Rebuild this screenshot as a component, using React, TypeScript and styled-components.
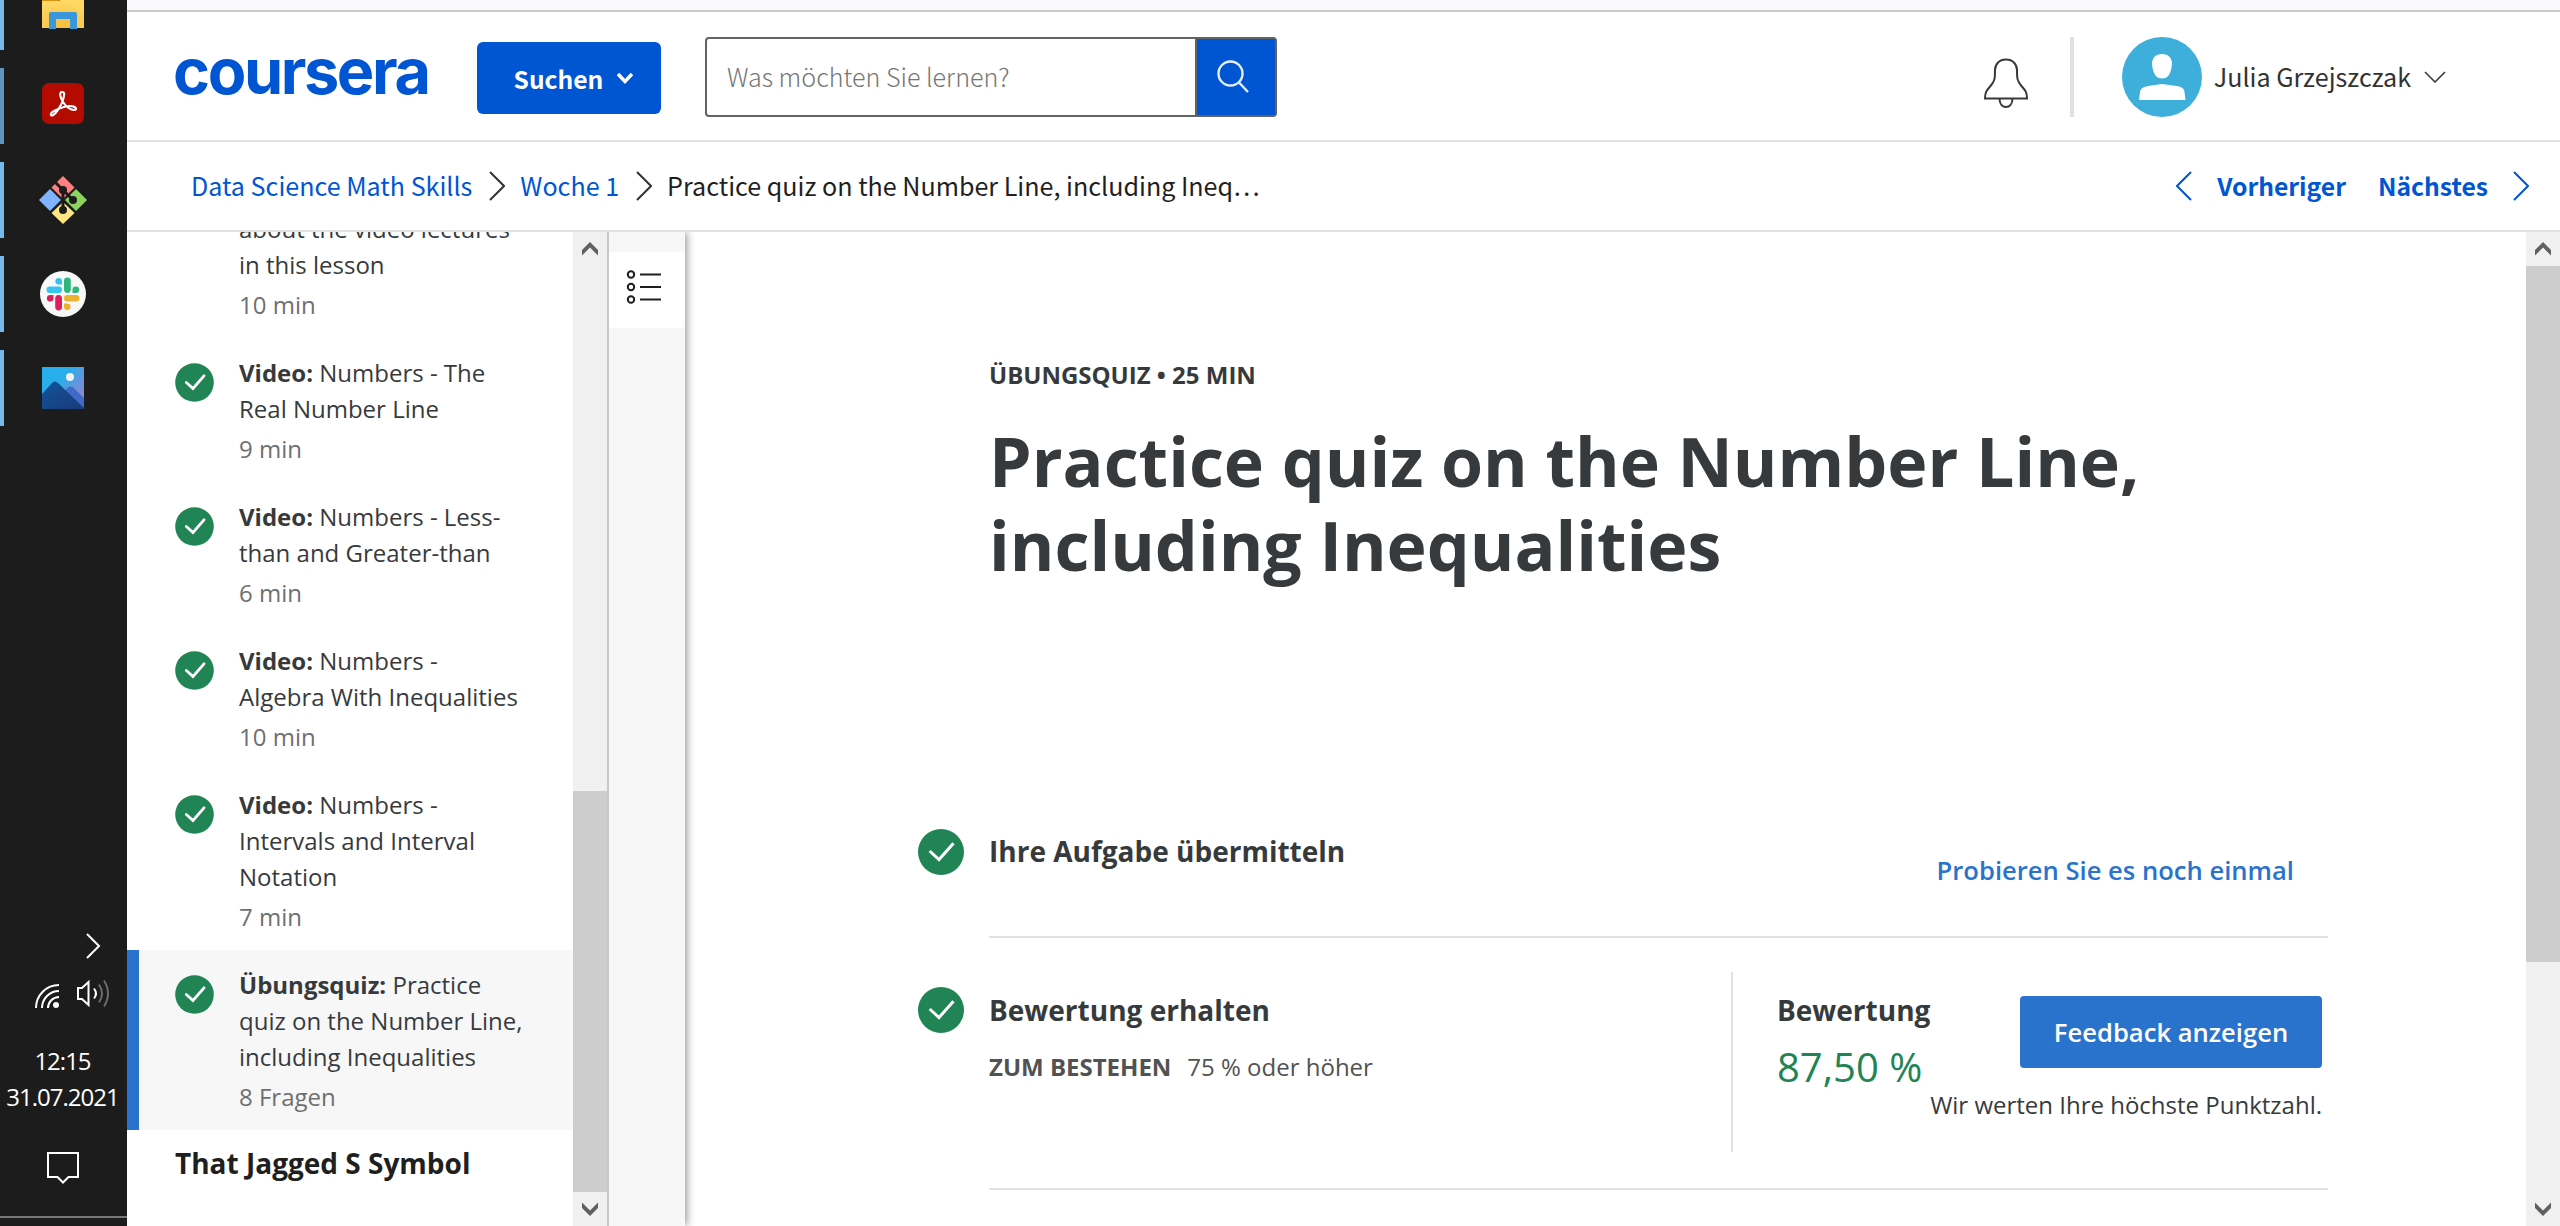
import React from "react";
import styled, { createGlobalStyle } from "styled-components";

const sans = `"Open Sans", "Noto Sans", sans-serif`;
const source = `"Noto Sans CJK SC", "Noto Sans", sans-serif`;

const Global = createGlobalStyle`
  * { box-sizing: border-box; }
  body { margin: 0; background: #fff; font-family: ${sans}; color: #373a3c; overflow: hidden; }
  svg { display: block; flex: none; }
`;

const Screen = styled.div`
  display: grid;
  grid-template-columns: 127px minmax(0, 1fr);
  width: 2560px;
  height: 1226px;
  overflow: hidden;
`;

/* Taskbar */
const Taskbar = styled.aside`
  display: flex;
  flex-direction: column;
  background: #1c1c1c;
  height: 1226px;
  overflow: hidden;
`;
const Apps = styled.div`
  display: flex;
  flex-direction: column;
  gap: 18px;
  margin-top: -26px;
`;
const AppTile = styled.div<{ $dim?: boolean }>`
  height: 76px;
  border-left: 4px solid ${(p) => (p.$dim ? "#5f94c0" : "#76b9ed")};
  padding-right: 5px;
  display: flex;
  align-items: center;
  justify-content: center;
`;
const Tray = styled.div`
  display: flex;
  flex-direction: column;
  margin-top: auto;
  height: 294px;
`;
const TrayRow = styled.div<{ $left: number; $top: number; $gap?: number }>`
  display: flex;
  align-items: flex-end;
  gap: ${(p) => p.$gap ?? 0}px;
  padding-left: ${(p) => p.$left}px;
  margin-top: ${(p) => p.$top}px;
`;
const Clock = styled.div`
  margin-top: 35px;
  color: #fff;
  font-size: 24px;
  line-height: 36px;
  letter-spacing: -1px;
  text-align: center;
  white-space: nowrap;
  padding-right: 2px;
`;
const TrayEdge = styled.div`
  margin-top: auto;
  margin-bottom: 8px;
  height: 2px;
  background: #777;
`;

/* Page frame */
const Page = styled.div`
  display: flex;
  flex-direction: column;
  background: #fff;
  min-width: 0;
  height: 1226px;
`;
const BrowserEdge = styled.div`
  height: 12px;
  background: #f9f9fc;
  border-bottom: 2px solid #ccc;
  flex: none;
`;
const Header = styled.header`
  height: 130px;
  flex: none;
  display: flex;
  align-items: flex-start;
  padding: 25px 114px 0 46px;
  border-bottom: 2px solid #e1e1e1;
  font-family: ${source};
  font-size: 25.1px;
`;
const Logo = styled.div`
  width: 304px;
  font-family: Inter, sans-serif;
  font-weight: 700;
  font-size: 63px;
  line-height: 69px;
  letter-spacing: -2.4px;
  color: #0056d2;
`;
const Explore = styled.button`
  width: 184px;
  height: 72px;
  margin-top: 5px;
  border: 0;
  border-radius: 6px;
  padding: 0 0 0 10px;
  background: #0056d2;
  color: #fff;
  font: 700 24.6px/36px ${source};
  display: flex;
  align-items: center;
  justify-content: center;
  gap: 13px;
`;
const Search = styled.div`
  margin-left: 44px;
  width: 572px;
  height: 80px;
  border: 2px solid #636363;
  border-radius: 4px;
  display: flex;
`;
const SearchField = styled.div`
  flex: 1;
  padding-left: 20px;
  line-height: 74px;
  font-weight: 300;
  color: #757575;
  border-right: 2px solid #636363;
`;
const SearchButton = styled.div`
  width: 78px;
  background: #0056d2;
  display: flex;
  align-items: center;
  justify-content: center;
`;
const Account = styled.div`
  margin-left: auto;
  display: flex;
  align-items: center;
  height: 80px;
`;
const Separator = styled.div`
  width: 4px;
  height: 80px;
  margin: 0 48px 0 42px;
  background: #e1e1e1;
`;
const UserName = styled.span`
  margin: 0 13px 2px 12px;
  color: #333;
`;

const Crumbs = styled.nav`
  height: 90px;
  flex: none;
  display: flex;
  align-items: center;
  border-bottom: 2px solid #e1e1e1;
  padding: 0 31px 0 64px;
  font-family: ${source};
  font-size: 25.1px;
  line-height: 36px;
  white-space: nowrap;
`;
const Crumb = styled.a<{ $current?: boolean }>`
  margin-bottom: 2px;
  color: ${(p) => (p.$current ? "#1f1f1f" : "#0056d2")};
`;
const CrumbArrow = styled.span`
  margin: 0 15px 0 17px;
`;
const Pager = styled.div`
  margin-left: auto;
  display: flex;
  align-items: center;
  font-size: 24.7px;
  font-weight: 700;
  color: #0056d2;
`;
const PagerLabel = styled.span<{ $before: number; $after: number }>`
  margin: 0 ${(p) => p.$after}px 2px ${(p) => p.$before}px;
`;

/* Body */
const Body = styled.div`
  height: 994px;
  display: grid;
  grid-template-columns: 446px 34px 78px minmax(0, 1fr) 34px;
  overflow: hidden;
`;
const Lessons = styled.div`
  height: 994px;
  display: flex;
  flex-direction: column;
  justify-content: flex-end;
  overflow: hidden;
`;
const Lesson = styled.div<{ $active?: boolean }>`
  flex: none;
  display: flex;
  padding: 17px 40px 15px 36px;
  border-left: 12px solid ${(p) => (p.$active ? "#2a73cc" : "transparent")};
  background: ${(p) => (p.$active ? "#f7f7f7" : "#fff")};
  font-size: 24px;
  line-height: 36px;
`;
const LessonMark = styled.div`
  width: 64px;
  padding: 7.5px 0 0 0.3px;
  flex: none;
`;
const LessonText = styled.div`
  color: #373a3c;
  white-space: nowrap;
`;
const LessonMeta = styled.div`
  margin-top: 4px;
  color: #6f6f6f;
`;
const LessonHeading = styled.div`
  flex: none;
  height: 96px;
  padding: 14px 0 0 48px;
  font-size: 28px;
  font-weight: 700;
  line-height: 38px;
  color: #1f1f1f;
`;
const ScrollTrack = styled.div`
  display: flex;
  flex-direction: column;
  background: #f0f0f0;
  height: 994px;
`;
const ScrollArrow = styled.div`
  height: 34px;
  flex: none;
  display: flex;
  align-items: center;
  justify-content: center;
`;
const ScrollThumb = styled.div<{ $offset: number; $length: number }>`
  margin-top: ${(p) => p.$offset}px;
  margin-bottom: auto;
  height: ${(p) => p.$length}px;
  background: #cdcdcd;
`;
const Rail = styled.div`
  border-left: 2px solid #c8c8c8;
  background: #f7f7f7;
  box-shadow: 2px 0 8px rgba(0, 0, 0, 0.4);
  clip-path: inset(0 -14px 0 0);
  padding-top: 20px;
  position: relative;
`;
const RailButton = styled.div`
  height: 76px;
  border-radius: 4px;
  background: #fff;
  display: flex;
  align-items: center;
  justify-content: center;
  padding: 0 6px 7px 0;
`;
const Main = styled.main`
  padding: 125px 198px 0 233px;
`;
const Eyebrow = styled.div`
  margin-left: 71px;
  font-size: 24px;
  line-height: 36px;
  font-weight: 700;
  white-space: nowrap;
`;
const Title = styled.h1`
  margin: 26px 0 0 71px;
  font-size: 68px;
  line-height: 84px;
  font-weight: 700;
  white-space: nowrap;
  height: 378px;
`;
const Step = styled.section`
  display: flex;
  align-items: flex-start;
`;
const StepBody = styled.div<{ $height: number }>`
  margin-left: 25px;
  flex: 1;
  height: ${(p) => p.$height}px;
  border-bottom: 2px solid #e1e1e1;
  display: flex;
`;
const StepMark = styled.div<{ $top: number }>`
  padding-top: ${(p) => p.$top}px;
`;
const StepInfo = styled.div<{ $top: number }>`
  padding-top: ${(p) => p.$top}px;
  white-space: nowrap;
`;
const StepTitle = styled.div`
  font-size: 28px;
  line-height: 38px;
  font-weight: 700;
`;
const Requirement = styled.div`
  margin-top: 20px;
  display: flex;
  gap: 16px;
  font-size: 24px;
  line-height: 36px;
  color: #525252;
`;
const Strong = styled.span`
  font-weight: 700;
`;
const Retry = styled.a`
  margin: 56px 34px 0 auto;
  font-size: 25.6px;
  line-height: 36px;
  font-weight: 600;
  color: #2a73cc;
  white-space: nowrap;
`;
const GradePane = styled.div`
  margin: 34px 6px 0 auto;
  height: 180px;
  width: 591px;
  border-left: 2px solid #e1e1e1;
  padding-left: 44px;
  display: flex;
  justify-content: space-between;
  white-space: nowrap;
`;
const Grade = styled.div`
  padding-top: 19px;
  width: 153px;
`;
const GradeValue = styled.div`
  margin-top: 11px;
  font-size: 40px;
  line-height: 54px;
  color: #208455;
`;
const GradeAction = styled.div`
  padding-top: 24px;
  display: flex;
  flex-direction: column;
  align-items: flex-end;
  font-size: 24px;
  line-height: 36px;
`;
const Feedback = styled.button`
  width: 302px;
  height: 72px;
  border: 0;
  border-radius: 4px;
  padding: 2px 0 0;
  margin-bottom: 19px;
  background: #2a73cc;
  color: #fff;
  font: 600 25.6px/36px ${sans};
`;

const Chevron = ({ w, h, d, color, sw = 2 }: { w: number; h: number; d: string; color: string; sw?: number }) => (
  <svg width={w} height={h} viewBox={`0 0 ${w} ${h}`} fill="none" stroke={color} strokeWidth={sw}>
    <path d={d} />
  </svg>
);
const right = "M1 1L15 15L1 29";
const left = "M15 1L1 15L15 29";

const SmallCheck = () => (
  <svg width="39" height="39" viewBox="0 0 39 39">
    <circle cx="19.5" cy="19.5" r="19.3" fill="#208455" />
    <path d="M11.3 19.5L18 25.5L29 12.8" fill="none" stroke="#fff" strokeWidth="2.8" strokeLinecap="round" />
  </svg>
);
const BigCheck = () => (
  <svg width="46" height="46" viewBox="0 0 46 46">
    <circle cx="23" cy="23" r="23" fill="#208455" />
    <path d="M11.7 22L21 30.5L35.5 14.3" fill="none" stroke="#fff" strokeWidth="3" />
  </svg>
);

const Scrollbar = ({ offset, length }: { offset: number; length: number }) => (
  <ScrollTrack>
    <ScrollArrow>
      <svg width="16" height="14" viewBox="0 0 16 14"><path d="M8 0L16 8V13.5L8 5.5L0 13.5V8Z" fill="#606060" /></svg>
    </ScrollArrow>
    <ScrollThumb $offset={offset} $length={length} />
    <ScrollArrow>
      <svg width="16" height="14" viewBox="0 0 16 14"><path d="M8 14L16 6V0.5L8 8.5L0 0.5V6Z" fill="#606060" /></svg>
    </ScrollArrow>
  </ScrollTrack>
);

const FolderIcon = () => (
  <svg width="42" height="42" viewBox="0 0 42 42">
    <defs><radialGradient id="fold" cx=".5" cy=".9" r=".8"><stop offset="0" stopColor="#f5bd3c" /><stop offset="1" stopColor="#ffd765" /></radialGradient></defs>
    <path d="M0 4H17V10H0Z" fill="#d8930e" />
    <path d="M0 10H17L19 8H42V37H0Z" fill="url(#fold)" />
    <path d="M7 38V23Q7 21 9 21H33Q35 21 35 23V38H28V28H14V38Z" fill="#3a97dc" />
  </svg>
);
const AcrobatIcon = () => (
  <svg width="42" height="46" viewBox="0 0 42 46">
    <rect y="0" width="42" height="41" rx="7" fill="#b30b00" />
    <path d="M20 9C17 9 18 14 21 19C24 24 29 27 32 27C36 27 34 23 28 23C22 23 16 26 12 28C8 30 8 33 10.500 32.500C14 31 19 23 21 17C22.500 12 23 9 20 9Z" fill="none" stroke="#fff" strokeWidth="2.100" strokeLinejoin="round" />
  </svg>
);
const GitIcon = () => (
  <svg width="48" height="48" viewBox="0 0 48 48">
    <path d="M24 0L35.500 11.500L24 23L12.500 11.500Z" fill="#ff8080" />
    <path d="M11 13L22 24L11 35L0 24Z" fill="#80b3ff" />
    <path d="M37 13L48 24L37 35L26 24Z" fill="#8dd35f" />
    <path d="M24 26L35.500 37L24 48L12.500 37Z" fill="#ffe680" />
    <path d="M15.500 5.500L24 14V34M24 14L34 24" fill="none" stroke="#1c1c1c" strokeWidth="3" />
    <circle cx="24" cy="14" r="4" fill="#1c1c1c" />
    <circle cx="34" cy="24" r="4" fill="#1c1c1c" />
    <circle cx="24" cy="34" r="4" fill="#1c1c1c" />
  </svg>
);
const SlackIcon = () => (
  <svg width="46" height="46" viewBox="0 0 46 46">
    <circle cx="23" cy="23" r="23" fill="#f8f8f8" />
    <g fill="#36c5f0"><rect x="6.500" y="15.500" width="15.500" height="6.500" rx="3.250" /><path d="M22 13.500H18.700A3.300 3.300 0 1 1 22 10.200Z" /></g>
    <g fill="#2eb67d"><rect x="24" y="6.500" width="6.800" height="15.500" rx="3.400" /><path d="M32.500 22V18.700A3.300 3.300 0 1 1 35.800 22Z" /></g>
    <g fill="#ecb22e"><rect x="24" y="24" width="15.500" height="6.500" rx="3.250" /><path d="M24 32.500H27.300A3.300 3.300 0 1 1 24 35.800Z" /></g>
    <g fill="#e01e5a"><rect x="15.200" y="24" width="6.800" height="15.500" rx="3.400" /><path d="M13.500 24V27.300A3.300 3.300 0 1 1 10.200 24Z" /></g>
  </svg>
);
const PhotosIcon = () => (
  <svg width="42" height="42" viewBox="0 0 42 42">
    <defs>
      <linearGradient id="sky" x1="0" y1="0" x2="1" y2=".8"><stop offset=".4" stopColor="#28aeea" /><stop offset="1" stopColor="#9b7fd0" /></linearGradient>
      <linearGradient id="hill" x1="0" y1="0" x2="1" y2="1"><stop stopColor="#10539b" /><stop offset="1" stopColor="#1b3a78" /></linearGradient>
    </defs>
    <rect width="42" height="42" fill="url(#sky)" />
    <path d="M20 27L26 20.500Q28.500 18.500 31 20.500L42 31V42H20Z" fill="#4169c8" />
    <path d="M0 27L10 16Q13 13 16 16L42 41V42H0Z" fill="url(#hill)" />
    <circle cx="28" cy="10" r="4" fill="#f2f4f8" />
  </svg>
);

const lessons = [
  { kind: "", lines: ["about the video lectures", "in this lesson"], meta: "10 min" },
  { kind: "Video:", lines: ["Numbers - The", "Real Number Line"], meta: "9 min" },
  { kind: "Video:", lines: ["Numbers - Less-", "than and Greater-than"], meta: "6 min" },
  { kind: "Video:", lines: ["Numbers -", "Algebra With Inequalities"], meta: "10 min" },
  { kind: "Video:", lines: ["Numbers -", "Intervals and Interval", "Notation"], meta: "7 min" },
  { kind: "Übungsquiz:", lines: ["Practice", "quiz on the Number Line,", "including Inequalities"], meta: "8 Fragen", active: true },
];

export default function App() {
  return (
    <Screen>
      <Global />
      <Taskbar>
        <Apps>
          <AppTile><FolderIcon /></AppTile>
          <AppTile $dim><AcrobatIcon /></AppTile>
          <AppTile><GitIcon /></AppTile>
          <AppTile><SlackIcon /></AppTile>
          <AppTile><PhotosIcon /></AppTile>
        </Apps>
        <Tray>
          <TrayRow $left={85} $top={0}>
            <Chevron w={16} h={28} d="M2 2L14 14L2 26" color="#fff" />
          </TrayRow>
          <TrayRow $left={35} $top={18} $gap={17}>
            <svg width="25" height="28" viewBox="0 0 25 28" fill="none" stroke="#fff" strokeWidth="2">
              <path d="M1 28A23 23 0 0 1 24 5M7 28A17 17 0 0 1 24 11M13 28A11 11 0 0 1 24 17" />
              <circle cx="21" cy="25" r="3" fill="#fff" stroke="none" />
            </svg>
            <svg width="33" height="30" viewBox="0 0 33 30" fill="none" stroke="#fff" strokeWidth="2">
              <path d="M1 10H5L11.500 4V27L5 21H1Z" />
              <path d="M17 10.500Q21 15.500 17 20.500" />
              <path d="M22 6.500Q28 15.500 22 24.500M27 2.500Q35 15.500 27 28.500" stroke="#6b6b6b" />
            </svg>
          </TrayRow>
          <Clock>12:15<br />31.07.2021</Clock>
          <TrayRow $left={47} $top={37}>
            <svg width="32" height="33" viewBox="0 0 32 33" fill="none" stroke="#fff" strokeWidth="2">
              <path d="M1 1H31V25H21.500L16 30.500L10.500 25H1Z" />
            </svg>
          </TrayRow>
          <TrayEdge />
        </Tray>
      </Taskbar>
      <Page>
        <BrowserEdge />
        <Header>
          <Logo>coursera</Logo>
          <Explore>
            Suchen
            <Chevron w={18} h={14} d="M2 3L9 10.500L16 3" color="#fff" sw={3.4} />
          </Explore>
          <Search>
            <SearchField>Was möchten Sie lernen?</SearchField>
            <SearchButton>
              <svg width="38" height="34" viewBox="0 0 38 34" fill="none" stroke="#e8eefa" strokeWidth="2.4">
                <circle cx="13.500" cy="13.500" r="12" />
                <path d="M22 22.500L31 32" />
              </svg>
            </SearchButton>
          </Search>
          <Account>
            <svg width="44" height="70" viewBox="0 0 44 70" fill="none" stroke="#373a3c" strokeWidth="2">
              <path d="M22 17.500C15 17.500 11 22.500 11 28C11 36 11 39 6.500 44C2.500 48.500 1 50.500 1 56.500H43C43 50.500 41.500 48.500 37.500 44C33 39 33 36 33 28C33 22.500 29 17.500 22 17.500Z" />
              <path d="M15.500 56.500C15.500 62 18.500 65 22 65S28.500 62 28.500 56.500" />
            </svg>
            <Separator />
            <svg width="80" height="80" viewBox="0 0 80 80">
              <circle cx="40" cy="40" r="40" fill="#3eaedb" />
              <path d="M40 17C46.500 17 50 21 50 27C49 37 46 41.500 40 41.500S31 37 30 27C30 21 33.500 17 40 17Z" fill="#fff" />
              <path d="M17 63L18 55C18.500 51 22 50 26 49L40 47L55 49C60 50 62 51.500 62.500 55L63.500 63Z" fill="#fff" />
            </svg>
            <UserName>Julia Grzejszczak</UserName>
            <Chevron w={22} h={12} d="M1 1L11 11L21 1" color="#333" sw={1.5} />
          </Account>
        </Header>
        <Crumbs>
          <Crumb>Data Science Math Skills</Crumb>
          <CrumbArrow><Chevron w={16} h={30} d={right} color="#333" /></CrumbArrow>
          <Crumb>Woche 1</Crumb>
          <CrumbArrow><Chevron w={16} h={30} d={right} color="#333" /></CrumbArrow>
          <Crumb $current>Practice quiz on the Number Line, including Ineq…</Crumb>
          <Pager>
            <Chevron w={16} h={30} d={left} color="#0056d2" />
            <PagerLabel $before={25} $after={32}>Vorheriger</PagerLabel>
            <PagerLabel $before={0} $after={25}>Nächstes</PagerLabel>
            <Chevron w={16} h={30} d={right} color="#0056d2" />
          </Pager>
        </Crumbs>
        <Body>
          <Lessons>
            {lessons.map((l) => (
              <Lesson key={l.lines.join()} $active={l.active}>
                <LessonMark>{l.kind && <SmallCheck />}</LessonMark>
                <LessonText>
                  {l.lines.map((line, i) => (
                    <div key={line}>{i === 0 && l.kind && <b>{l.kind} </b>}{line}</div>
                  ))}
                  <LessonMeta>{l.meta}</LessonMeta>
                </LessonText>
              </Lesson>
            ))}
            <LessonHeading>That Jagged S Symbol</LessonHeading>
          </Lessons>
          <Scrollbar offset={525} length={401} />
          <Rail>
            <RailButton>
              <svg width="36" height="34" viewBox="0 0 36 34" fill="none" stroke="#1f1f1f" strokeWidth="2">
                <circle cx="5" cy="4.500" r="3.200" /><path d="M14 4.500H35" />
                <circle cx="5" cy="17" r="3.200" /><path d="M14 17H35" />
                <circle cx="5" cy="29.500" r="3.200" /><path d="M14 29.500H35" />
              </svg>
            </RailButton>
          </Rail>
          <Main>
            <Eyebrow>ÜBUNGSQUIZ • 25 MIN</Eyebrow>
            <Title>Practice quiz on the Number Line,<br />including Inequalities</Title>
            <Step>
              <StepMark $top={32}><BigCheck /></StepMark>
              <StepBody $height={141}>
                <StepInfo $top={35}><StepTitle>Ihre Aufgabe übermitteln</StepTitle></StepInfo>
                <Retry>Probieren Sie es noch einmal</Retry>
              </StepBody>
            </Step>
            <Step>
              <StepMark $top={49}><BigCheck /></StepMark>
              <StepBody $height={252}>
                <StepInfo $top={53}>
                  <StepTitle>Bewertung erhalten</StepTitle>
                  <Requirement><Strong>ZUM BESTEHEN</Strong>75 % oder höher</Requirement>
                </StepInfo>
                <GradePane>
                  <Grade>
                    <StepTitle>Bewertung</StepTitle>
                    <GradeValue>87,50 %</GradeValue>
                  </Grade>
                  <GradeAction>
                    <Feedback>Feedback anzeigen</Feedback>
                    Wir werten Ihre höchste Punktzahl.
                  </GradeAction>
                </GradePane>
              </StepBody>
            </Step>
          </Main>
          <Scrollbar offset={0} length={696} />
        </Body>
      </Page>
    </Screen>
  );
}
